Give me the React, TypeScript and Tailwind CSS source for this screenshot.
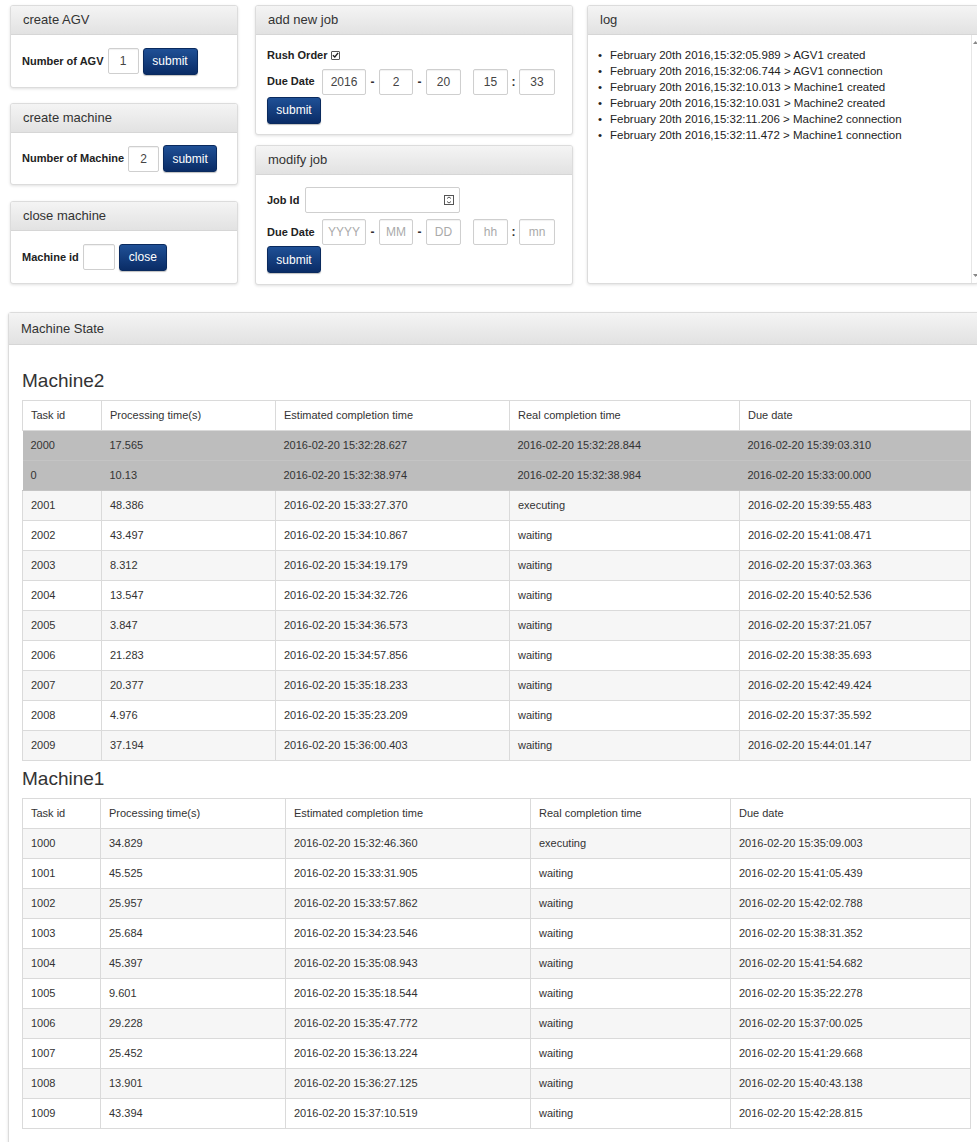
import React from "react";

const FONT = { fontFamily: '"Liberation Sans", Arial, sans-serif' };

function Panel({
  title,
  className = "",
  bodyClass = "",
  children,
}: {
  title: string;
  className?: string;
  bodyClass?: string;
  children: React.ReactNode;
}) {
  return (
    <div
      className={`border border-[#dcdcdc] rounded-[3px] bg-white shadow-[0_1px_3px_rgba(0,0,0,0.12)] overflow-hidden ${className}`}
    >
      <div className="h-[29px] px-[12px] flex items-center bg-[linear-gradient(to_bottom,#f4f4f4,#e2e2e2)] border-b border-[#d6d6d6] text-[13px] text-[#333]">
        {title}
      </div>
      <div className={bodyClass}>{children}</div>
    </div>
  );
}

function Btn({ children, w }: { children: React.ReactNode; w: string }) {
  return (
    <button
      className={`h-[27px] ${w} rounded-[3px] bg-[linear-gradient(to_bottom,#1f5096,#0a2c66)] border border-[#0a2a5e] text-white text-[12px] leading-none shadow-[0_1px_1px_rgba(0,0,0,0.25)]`}
    >
      {children}
    </button>
  );
}

function Box({ w, value, ph }: { w: string; value?: string; ph?: string }) {
  return (
    <div
      className={`h-[26px] ${w} border border-[#cfcfcf] rounded-[2px] bg-white flex items-center justify-center text-[12px] shadow-[inset_0_1px_1px_rgba(0,0,0,0.06)] ${
        value ? "text-[#444]" : "text-[#aaa]"
      }`}
    >
      {value ?? ph}
    </div>
  );
}

function Label({ children, w = "" }: { children: React.ReactNode; w?: string }) {
  return (
    <span className={`font-bold text-[11px] text-[#222] whitespace-nowrap ${w}`}>{children}</span>
  );
}

function DateRow({ vals, ph }: { vals?: string[]; ph?: string[] }) {
  const v = (i: number) => (vals ? vals[i] : undefined);
  const p = (i: number) => (ph ? ph[i] : undefined);
  return (
    <div className="flex items-center">
      <Label w="w-[55px]">Due Date</Label>
      <Box w="w-[44px]" value={v(0)} ph={p(0)} />
      <span className="w-[13px] text-center text-[12px] font-bold">-</span>
      <Box w="w-[34px]" value={v(1)} ph={p(1)} />
      <span className="w-[13px] text-center text-[12px] font-bold">-</span>
      <Box w="w-[35px]" value={v(2)} ph={p(2)} />
      <span className="w-[12px]" />
      <Box w="w-[35px]" value={v(3)} ph={p(3)} />
      <span className="w-[11px] text-center text-[12px] font-bold">:</span>
      <Box w="w-[36px]" value={v(4)} ph={p(4)} />
    </div>
  );
}

const logs = [
  "February 20th 2016,15:32:05.989 > AGV1 created",
  "February 20th 2016,15:32:06.744 > AGV1 connection",
  "February 20th 2016,15:32:10.013 > Machine1 created",
  "February 20th 2016,15:32:10.031 > Machine2 created",
  "February 20th 2016,15:32:11.206 > Machine2 connection",
  "February 20th 2016,15:32:11.472 > Machine1 connection",
];

type Row = [string, string, string, string, string];

const machine2: Row[] = [
  ["2000", "17.565", "2016-02-20 15:32:28.627", "2016-02-20 15:32:28.844", "2016-02-20 15:39:03.310"],
  ["0", "10.13", "2016-02-20 15:32:38.974", "2016-02-20 15:32:38.984", "2016-02-20 15:33:00.000"],
  ["2001", "48.386", "2016-02-20 15:33:27.370", "executing", "2016-02-20 15:39:55.483"],
  ["2002", "43.497", "2016-02-20 15:34:10.867", "waiting", "2016-02-20 15:41:08.471"],
  ["2003", "8.312", "2016-02-20 15:34:19.179", "waiting", "2016-02-20 15:37:03.363"],
  ["2004", "13.547", "2016-02-20 15:34:32.726", "waiting", "2016-02-20 15:40:52.536"],
  ["2005", "3.847", "2016-02-20 15:34:36.573", "waiting", "2016-02-20 15:37:21.057"],
  ["2006", "21.283", "2016-02-20 15:34:57.856", "waiting", "2016-02-20 15:38:35.693"],
  ["2007", "20.377", "2016-02-20 15:35:18.233", "waiting", "2016-02-20 15:42:49.424"],
  ["2008", "4.976", "2016-02-20 15:35:23.209", "waiting", "2016-02-20 15:37:35.592"],
  ["2009", "37.194", "2016-02-20 15:36:00.403", "waiting", "2016-02-20 15:44:01.147"],
];

const machine1: Row[] = [
  ["1000", "34.829", "2016-02-20 15:32:46.360", "executing", "2016-02-20 15:35:09.003"],
  ["1001", "45.525", "2016-02-20 15:33:31.905", "waiting", "2016-02-20 15:41:05.439"],
  ["1002", "25.957", "2016-02-20 15:33:57.862", "waiting", "2016-02-20 15:42:02.788"],
  ["1003", "25.684", "2016-02-20 15:34:23.546", "waiting", "2016-02-20 15:38:31.352"],
  ["1004", "45.397", "2016-02-20 15:35:08.943", "waiting", "2016-02-20 15:41:54.682"],
  ["1005", "9.601", "2016-02-20 15:35:18.544", "waiting", "2016-02-20 15:35:22.278"],
  ["1006", "29.228", "2016-02-20 15:35:47.772", "waiting", "2016-02-20 15:37:00.025"],
  ["1007", "25.452", "2016-02-20 15:36:13.224", "waiting", "2016-02-20 15:41:29.668"],
  ["1008", "13.901", "2016-02-20 15:36:27.125", "waiting", "2016-02-20 15:40:43.138"],
  ["1009", "43.394", "2016-02-20 15:37:10.519", "waiting", "2016-02-20 15:42:28.815"],
];

const headers = ["Task id", "Processing time(s)", "Estimated completion time", "Real completion time", "Due date"];

function StateTable({ rows, widths, done }: { rows: Row[]; widths: number[]; done: number }) {
  return (
    <table className="table-fixed border-collapse w-[948px] text-[11px] text-[#333]">
      <colgroup>
        {widths.map((w, i) => (
          <col key={i} style={{ width: w }} />
        ))}
      </colgroup>
      <thead>
        <tr className="h-[30px] bg-white">
          {headers.map((h) => (
            <th key={h} className="border border-[#dadada] px-[8px] text-left font-normal">
              {h}
            </th>
          ))}
        </tr>
      </thead>
      <tbody>
        {rows.map((r, i) => (
          <tr
            key={r[0]}
            className={`h-[30px] ${
              i < done ? "bg-[#bdbdbd]" : i % 2 === 0 ? "bg-[#f6f6f6]" : "bg-white"
            }`}
          >
            {r.map((c, j) => (
              <td
                key={j}
                className={`px-[8px] ${
                  i < done ? "border-y border-[#c4c4c4]" : "border border-[#dadada]"
                }`}
              >
                {c}
              </td>
            ))}
          </tr>
        ))}
      </tbody>
    </table>
  );
}

export default function App() {
  return (
    <div style={FONT} className="w-[977px] h-[1142px] overflow-hidden bg-white text-[#333]">
      {/* control panels */}
      <div className="flex items-start pt-[5px] pl-[10px]">
        <div className="w-[228px] shrink-0 flex flex-col">
          <Panel title="create AGV" bodyClass="h-[52px] px-[11px] flex items-center">
            <Label w="mr-[4px]">Number of AGV</Label>
            <Box w="w-[31px]" value="1" />
            <span className="w-[4px]" />
            <Btn w="w-[55px]">submit</Btn>
          </Panel>
          <Panel title="create machine" className="mt-[15px]" bodyClass="h-[51px] px-[11px] flex items-center">
            <Label w="mr-[4px]">Number of Machine</Label>
            <Box w="w-[31px]" value="2" />
            <span className="w-[4px]" />
            <Btn w="w-[54px]">submit</Btn>
          </Panel>
          <Panel title="close machine" className="mt-[16px]" bodyClass="h-[52px] px-[11px] flex items-center">
            <Label w="mr-[4px]">Machine id</Label>
            <Box w="w-[32px]" />
            <span className="w-[4px]" />
            <Btn w="w-[48px]">close</Btn>
          </Panel>
        </div>

        <div className="w-[318px] shrink-0 ml-[17px] flex flex-col">
          <Panel title="add new job" bodyClass="h-[99px] px-[11px] pt-[12px]">
            <div className="flex items-center">
              <Label>Rush Order</Label>
              <span className="ml-[3px] w-[9px] h-[9px] border border-[#555] rounded-[1px] flex items-center justify-center">
                <svg width="8" height="8" viewBox="0 0 8 8">
                  <path d="M1 4.2 L3.2 6.3 L7 1.5" stroke="#222" strokeWidth="1.6" fill="none" />
                </svg>
              </span>
            </div>
            <div className="mt-[5px]">
              <DateRow vals={["2016", "2", "20", "15", "33"]} />
            </div>
            <div className="mt-[2px]">
              <Btn w="w-[54px]">submit</Btn>
            </div>
          </Panel>
          <Panel title="modify job" className="mt-[10px]" bodyClass="h-[109px] px-[11px] pt-[12px]">
            <div className="flex items-center">
              <Label w="w-[38px]">Job Id</Label>
              <div className="h-[26px] w-[155px] border border-[#cfcfcf] rounded-[2px] flex items-center justify-end pr-[5px]">
                <svg width="10" height="10" viewBox="0 0 10 10">
                  <rect x="0.5" y="0.5" width="9" height="9" fill="none" stroke="#555" />
                  <path d="M3 3.5 L5 2 L7 3.5 M3 6.5 L5 8 L7 6.5" stroke="#555" fill="none" />
                </svg>
              </div>
            </div>
            <div className="mt-[6px]">
              <DateRow ph={["YYYY", "MM", "DD", "hh", "mn"]} />
            </div>
            <div className="mt-[1px]">
              <Btn w="w-[54px]">submit</Btn>
            </div>
          </Panel>
        </div>

        <div className="w-[392px] shrink-0 ml-[14px]">
          <Panel title="log" bodyClass="h-[248px] flex">
            <ul className="flex-1 pt-[12px] pl-[10px] text-[11.5px] leading-[16px] text-[#222]">
              {logs.map((l) => (
                <li key={l} className="flex">
                  <span className="w-[12px]">•</span>
                  {l}
                </li>
              ))}
            </ul>
            <div className="w-[7px] border-l border-[#e6e6e6] flex flex-col justify-between items-center py-[6px] text-[#888]">
              <svg width="5" height="3" viewBox="0 0 5 3">
                <path d="M0 3 L2.5 0 L5 3 Z" fill="#888" />
              </svg>
              <svg width="5" height="3" viewBox="0 0 5 3">
                <path d="M0 0 L2.5 3 L5 0 Z" fill="#888" />
              </svg>
            </div>
          </Panel>
        </div>
      </div>

      {/* machine state */}
      <div className="ml-[8px] mt-[27px] w-[980px] border border-[#dcdcdc] rounded-[3px] shadow-[0_1px_3px_rgba(0,0,0,0.12)]">
        <div className="h-[32px] px-[12px] flex items-center bg-[linear-gradient(to_bottom,#f4f4f4,#e2e2e2)] border-b border-[#d6d6d6] text-[13px] text-[#333]">
          Machine State
        </div>
        <div className="pl-[13px] pt-[25px] pb-[20px]">
          <h3 className="text-[19px] leading-[22px] text-[#333] mb-[8px]">Machine2</h3>
          <StateTable rows={machine2} widths={[79, 174, 234, 230, 231]} done={2} />
          <h3 className="text-[19px] leading-[22px] text-[#333] mt-[7px] mb-[8px]">Machine1</h3>
          <StateTable rows={machine1} widths={[78, 185, 245, 200, 240]} done={0} />
        </div>
      </div>
    </div>
  );
}
